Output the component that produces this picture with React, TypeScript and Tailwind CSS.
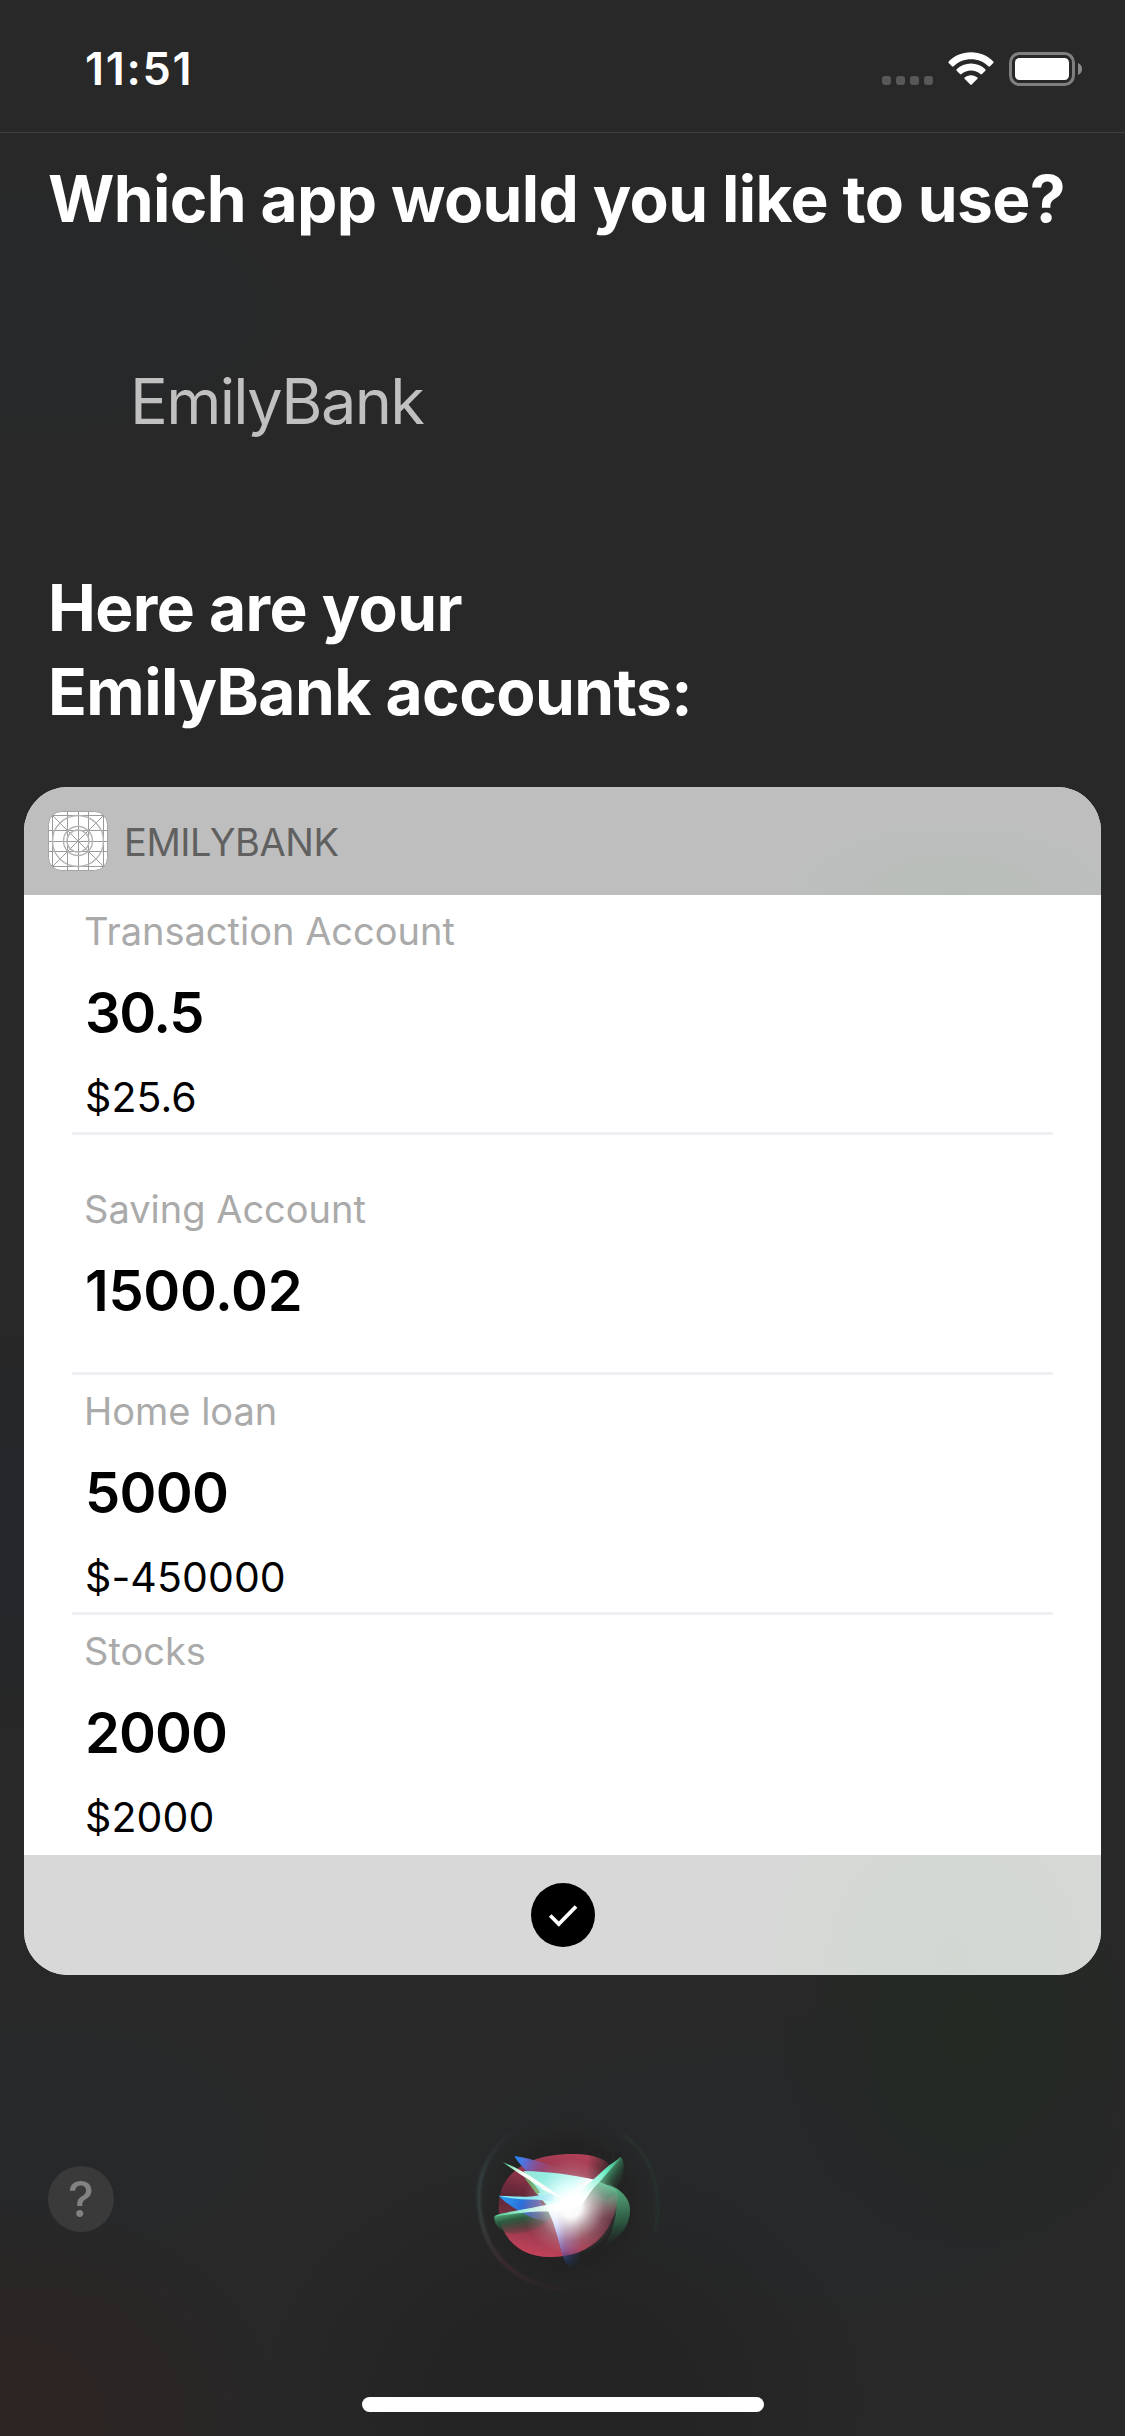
import React from "react";

type Account = {
  name: string;
  value: string;
  tracking: string;
  detail?: string;
};

const accounts: Account[] = [
  { name: "Transaction Account", value: "30.5", tracking: "tracking-[-1.4px]", detail: "$25.6" },
  { name: "Saving Account", value: "1500.02", tracking: "tracking-[-0.3px]" },
  { name: "Home loan", value: "5000", tracking: "tracking-[-0.7px]", detail: "$-450000" },
  { name: "Stocks", value: "2000", tracking: "tracking-[-0.9px]", detail: "$2000" },
];

function WifiIcon() {
  return (
    <svg className="h-[34px] w-[48px]" viewBox="0 0 48 34" fill="#fff">
      <path d="M24 0.300C33 0.300 41 3.900 46.300 9.500Q47 10.300 46.300 11L43 14.300Q42.200 15 41.400 14.300C36.800 9.900 30.700 7.300 24 7.300S11.200 9.900 6.600 14.300Q5.800 15 5 14.300L1.700 11Q1 10.300 1.700 9.500C7 3.900 15 0.300 24 0.300Z" />
      <path d="M24 11.500C29.600 11.500 34.600 13.700 38.300 17.300Q39 18.100 38.300 18.800L35 22.100Q34.200 22.800 33.400 22.100C30.900 19.800 27.600 18.500 24 18.500S17.100 19.800 14.600 22.100Q13.800 22.800 13 22.100L9.700 18.800Q9 18.100 9.700 17.300C13.400 13.700 18.400 11.500 24 11.500Z" />
      <path d="M24 23.200C26.600 23.200 28.800 24.200 30.400 25.600Q31 26.200 30.400 26.800L24.700 32.600Q24 33.300 23.300 32.600L17.600 26.800Q17 26.200 17.600 25.600C19.200 24.200 21.400 23.200 24 23.200Z" />
    </svg>
  );
}

function BatteryIcon() {
  return (
    <svg className="h-[34px] w-[74px]" viewBox="0 0 74 34">
      <rect x="1.500" y="1.500" width="63" height="31" rx="9" fill="none" stroke="#7f7f7f" strokeWidth="3" />
      <rect x="6" y="6" width="54" height="22" rx="4.500" fill="#fff" />
      <path d="M69 11C71.500 12 73 14.300 73 17S71.500 22 69 23Z" fill="#8a8a8a" />
    </svg>
  );
}

function GridIcon() {
  return (
    <svg className="size-[60px]" viewBox="0 0 60 60">
      <defs>
        <clipPath id="tile">
          <rect x="0.500" y="0.500" width="59" height="59" rx="13" />
        </clipPath>
      </defs>
      <g clipPath="url(#tile)" stroke="#9b9b9b" strokeWidth="1" fill="none">
        <rect width="60" height="60" fill="#fff" stroke="none" />
        <path d="M4.500 0V60M19.500 0V60M30.500 0V60M40.500 0V60M55.500 0V60M0 4.500H60M0 19.500H60M0 30.500H60M0 40.500H60M0 55.500H60" />
        <path d="M4 4L56 56M56 4L4 56" />
        <g stroke="#b4b4b4" strokeWidth="1.400">
          <circle cx="30" cy="30" r="25.500" />
          <circle cx="30" cy="30" r="14.500" />
          <circle cx="30" cy="30" r="11" />
        </g>
      </g>
      <rect x="0.500" y="0.500" width="59" height="59" rx="13" fill="none" stroke="#a4a4a4" />
    </svg>
  );
}

function SiriOrb() {
  return (
    <svg className="h-[230px] w-[250px]" viewBox="0 0 750 690">
      <defs>
        <linearGradient id="ring" gradientUnits="userSpaceOnUse" x1="200" y1="110" x2="300" y2="610">
          <stop offset="0" stopColor="#30505c" stopOpacity="0" />
          <stop offset="0.250" stopColor="#48686c" stopOpacity="0.550" />
          <stop offset="0.550" stopColor="#5a6a66" stopOpacity="0.550" />
          <stop offset="0.800" stopColor="#6a3040" stopOpacity="0.550" />
          <stop offset="1" stopColor="#6a3040" stopOpacity="0.100" />
        </linearGradient>
        <radialGradient id="shade">
          <stop offset="0" stopColor="#1f1f1f" />
          <stop offset="0.700" stopColor="#222222" stopOpacity="0.800" />
          <stop offset="1" stopColor="#262626" stopOpacity="0" />
        </radialGradient>
        <linearGradient id="red" gradientUnits="userSpaceOnUse" x1="400" y1="192" x2="330" y2="501">
          <stop offset="0" stopColor="#b04058" />
          <stop offset="0.300" stopColor="#8a3148" />
          <stop offset="0.520" stopColor="#5c2836" />
          <stop offset="0.700" stopColor="#753040" />
          <stop offset="0.850" stopColor="#a23c50" />
          <stop offset="1" stopColor="#c0425a" />
        </linearGradient>
        <linearGradient id="cornerShade" gradientUnits="userSpaceOnUse" x1="440" y1="235" x2="530" y2="245">
          <stop offset="0" stopColor="#232323" stopOpacity="0" />
          <stop offset="0.800" stopColor="#232323" stopOpacity="0.850" />
          <stop offset="1" stopColor="#232323" />
        </linearGradient>
        <linearGradient id="greenRight" gradientUnits="userSpaceOnUse" x1="500" y1="280" x2="520" y2="470">
          <stop offset="0" stopColor="#58b488" />
          <stop offset="0.350" stopColor="#43825f" />
          <stop offset="0.650" stopColor="#2c6045" stopOpacity="0.800" />
          <stop offset="1" stopColor="#263c30" stopOpacity="0" />
        </linearGradient>
        <linearGradient id="greenInner" gradientUnits="userSpaceOnUse" x1="470" y1="275" x2="450" y2="380">
          <stop offset="0" stopColor="#62c496" />
          <stop offset="0.450" stopColor="#5c9478" stopOpacity="0.750" />
          <stop offset="1" stopColor="#6a5058" stopOpacity="0" />
        </linearGradient>
        <linearGradient id="greenLeft" gradientUnits="userSpaceOnUse" x1="220" y1="365" x2="235" y2="440">
          <stop offset="0" stopColor="#4fa878" />
          <stop offset="0.300" stopColor="#2c5c40" />
          <stop offset="1" stopColor="#26382e" stopOpacity="0" />
        </linearGradient>
        <linearGradient id="greenTip" gradientUnits="userSpaceOnUse" x1="500" y1="235" x2="556" y2="270">
          <stop offset="0" stopColor="#4fa47c" />
          <stop offset="0.400" stopColor="#2f5c44" />
          <stop offset="1" stopColor="#26362e" stopOpacity="0" />
        </linearGradient>
        <linearGradient id="cyan" gradientUnits="userSpaceOnUse" x1="250" y1="245" x2="390" y2="350">
          <stop offset="0" stopColor="#a6e4d6" />
          <stop offset="0.350" stopColor="#86f0e2" />
          <stop offset="0.800" stopColor="#b4fdf8" />
          <stop offset="1" stopColor="#ffffff" />
        </linearGradient>
        <linearGradient id="blueTop" gradientUnits="userSpaceOnUse" x1="225" y1="200" x2="370" y2="260">
          <stop offset="0" stopColor="#1d8fff" />
          <stop offset="0.250" stopColor="#5f68cc" />
          <stop offset="0.500" stopColor="#8a56a0" stopOpacity="0.600" />
          <stop offset="0.900" stopColor="#a85080" stopOpacity="0" />
        </linearGradient>
        <linearGradient id="blueLeft" gradientUnits="userSpaceOnUse" x1="180" y1="320" x2="330" y2="395">
          <stop offset="0" stopColor="#2aa0f0" />
          <stop offset="0.400" stopColor="#2b70dc" />
          <stop offset="0.750" stopColor="#5c60b0" stopOpacity="0.700" />
          <stop offset="1" stopColor="#6a4c88" stopOpacity="0" />
        </linearGradient>
        <linearGradient id="blueDown" gradientUnits="userSpaceOnUse" x1="350" y1="350" x2="395" y2="540">
          <stop offset="0" stopColor="#ffffff" />
          <stop offset="0.350" stopColor="#a9b8f4" />
          <stop offset="0.700" stopColor="#6a5cb4" />
          <stop offset="0.840" stopColor="#243e78" />
          <stop offset="1" stopColor="#20304c" stopOpacity="0" />
        </linearGradient>
        <linearGradient id="downFade" gradientUnits="userSpaceOnUse" x1="352" y1="430" x2="425" y2="425">
          <stop offset="0" stopColor="#fff" />
          <stop offset="0.300" stopColor="#fff" stopOpacity="0.500" />
          <stop offset="1" stopColor="#fff" stopOpacity="0" />
        </linearGradient>
        <mask id="downMask">
          <rect width="750" height="690" fill="url(#downFade)" />
        </mask>
        <linearGradient id="beamRight" gradientUnits="userSpaceOnUse" x1="540" y1="205" x2="410" y2="325">
          <stop offset="0" stopColor="#3f9870" />
          <stop offset="0.350" stopColor="#6cf0c8" />
          <stop offset="0.700" stopColor="#b8fff0" />
          <stop offset="1" stopColor="#ffffff" />
        </linearGradient>
        <linearGradient id="beamLeft" gradientUnits="userSpaceOnUse" x1="165" y1="380" x2="350" y2="345">
          <stop offset="0" stopColor="#4fc890" />
          <stop offset="0.450" stopColor="#a2f0dc" />
          <stop offset="1" stopColor="#ffffff" />
        </linearGradient>
        <linearGradient id="beamTop" gradientUnits="userSpaceOnUse" x1="190" y1="220" x2="340" y2="310">
          <stop offset="0" stopColor="#48c888" />
          <stop offset="0.350" stopColor="#f4fff8" />
          <stop offset="1" stopColor="#ffffff" />
        </linearGradient>
        <radialGradient id="glow" gradientUnits="userSpaceOnUse" cx="392" cy="350" r="145">
          <stop offset="0" stopColor="#fff" />
          <stop offset="0.220" stopColor="#fff" stopOpacity="0.970" />
          <stop offset="0.450" stopColor="#fff" stopOpacity="0.550" />
          <stop offset="0.700" stopColor="#ffe8ec" stopOpacity="0.200" />
          <stop offset="1" stopColor="#ffd0d8" stopOpacity="0" />
        </radialGradient>
        <filter id="soft" x="-10%" y="-10%" width="120%" height="120%">
          <feGaussianBlur stdDeviation="2" />
        </filter>
        <filter id="softer" x="-10%" y="-10%" width="120%" height="120%">
          <feGaussianBlur stdDeviation="5" />
        </filter>
      </defs>
      <circle cx="385" cy="345" r="268" fill="url(#shade)" />
      <g filter="url(#softer)">
        <path d="M225 118C140 180 105 270 120 365C137 500 235 590 385 600" fill="none" stroke="url(#ring)" strokeWidth="7" />
        <path d="M550 135C600 170 642 225 652 320C655 350 652 390 645 425" fill="none" stroke="#2c4a38" strokeOpacity="0.400" strokeWidth="7" />
      </g>
      <g filter="url(#soft)">
        <path d="M176 350C176 245 270 192 395 192C480 192 536 215 534 300C530 420 460 501 330 501C235 501 176 440 176 350Z" fill="url(#red)" />
        <path d="M440 185H545V300L500 330L440 290Z" fill="url(#cornerShade)" />
        <path d="M163 380C190 368 260 365 350 350L330 385C300 420 240 440 200 428C175 418 162 400 163 380Z" fill="url(#greenLeft)" />
        <path d="M440 264L475 272C545 290 578 330 569 376C560 425 530 450 490 470C520 430 533 370 531 310Z" fill="url(#greenRight)" />
        <path d="M400 258L475 272C510 280 525 292 532 305C534 340 530 365 520 390L390 390Z" fill="url(#greenInner)" />
        <path d="M470 272L540 201C556 205 556 262 530 296Z" fill="url(#greenTip)" />
        <path d="M223 198C280 208 340 222 400 260L262 246C248 232 235 218 223 198Z" fill="url(#blueTop)" />
        <path d="M176 318L300 330L335 395C280 395 215 355 176 318Z" fill="url(#blueLeft)" />
        <path d="M250 243C330 245 400 254 475 272L425 345L340 370L290 310C280 285 268 265 250 243Z" fill="url(#cyan)" />
        <path d="M252 262L290 312L300 308C288 288 272 270 252 262Z" fill="#70a868" />
        <g mask="url(#downMask)">
          <path d="M320 355L430 350C430 420 420 520 410 540C385 540 374 515 366 490C350 430 340 390 320 355Z" fill="url(#blueDown)" />
        </g>
        <path d="M176 317C220 319 260 323 290 317L340 310L340 335L290 329C250 328 210 327 176 317Z" fill="#86e8f4" />
        <path d="M163 380C165 370 240 362 330 342L390 340L345 366C300 360 220 370 163 380Z" fill="url(#beamLeft)" />
        <path d="M543 203C510 218 480 252 430 294L390 335L415 338C460 300 500 250 543 203Z" fill="url(#beamRight)" />
        <path d="M188 216C225 230 265 254 310 284L375 330L310 300C280 275 235 252 188 216Z" fill="url(#beamTop)" />
        <circle cx="392" cy="350" r="145" fill="url(#glow)" />
      </g>
    </svg>
  );
}

export default function App() {
  return (
    <div className="flex h-[2436px] w-[1125px] flex-col overflow-hidden bg-[#282828] bg-[radial-gradient(ellipse_190px_220px_at_970px_2030px,#222a23_0%,#222a2300_100%),radial-gradient(ellipse_280px_220px_at_0px_2420px,#2c2524_30%,#2c252400_100%),radial-gradient(ellipse_300px_240px_at_562px_2400px,#232323_30%,#23232300_100%),radial-gradient(ellipse_420px_180px_at_760px_2180px,#26282a_20%,#26282a00_100%),radial-gradient(ellipse_300px_160px_at_40px_2140px,#26282a_20%,#26282a00_100%),radial-gradient(ellipse_320px_160px_at_40px_310px,#26282a_20%,#26282a00_100%),radial-gradient(ellipse_200px_200px_at_0px_1530px,#25272a_40%,#25272a00_100%)] font-['Inter',sans-serif] text-white">
      <header className="flex h-[133px] shrink-0 items-start border-b border-[#3f3f3f] pl-[85px]">
        <span className="mt-[47px] text-[45px] leading-[44px] font-semibold tracking-[1.7px]">11:51</span>
        <div className="mt-[52px] mr-[42px] ml-auto flex items-start">
          <div className="mt-[24px] mr-[14px] flex gap-[5px]">
            <i className="size-[9px] rounded-[3px] bg-[#585858]" />
            <i className="size-[9px] rounded-[3px] bg-[#585858]" />
            <i className="size-[9px] rounded-[3px] bg-[#585858]" />
            <i className="size-[9px] rounded-[3px] bg-[#585858]" />
          </div>
          <WifiIcon />
          <div className="ml-[14px]">
            <BatteryIcon />
          </div>
        </div>
      </header>

      <h1 className="mt-[24px] pl-[48px] text-[64px] leading-[84px] font-bold tracking-[-0.62px] whitespace-nowrap">
        Which app would you like to use?
      </h1>
      <p className="mt-[118px] pl-[130px] text-[63px] leading-[84px] tracking-[-1.65px] text-[#c0c0c0]">EmilyBank</p>
      <h2 className="mt-[123px] pl-[48px] text-[64px] leading-[84px] font-bold tracking-[-0.55px]">
        Here are your
        <br />
        EmilyBank accounts:
      </h2>

      <section className="mx-[24px] mt-[53px] shrink-0 overflow-hidden rounded-[44px] bg-white">
        <div className="flex h-[108px] items-center bg-[#bebebf] bg-[radial-gradient(ellipse_180px_80px_at_930px_108px,#b7beb8_0%,#b7beb800_100%)] pl-[24px]">
          <GridIcon />
          <span className="ml-[16px] pt-[2px] text-[38px] tracking-[-0.45px] text-[#606060]">EMILYBANK</span>
        </div>
        <ul className="px-[48px]">
          {accounts.map((a) => (
            <li
              key={a.name}
              className="flex h-[240px] flex-col justify-center border-b-[3px] border-[#efeff4] pl-[13px] last:border-transparent"
            >
              <span className="-ml-px text-[38px] leading-[48px] text-[#aaaaaa]">{a.name}</span>
              <span className={`mt-[26px] text-[56px] leading-[64px] font-semibold text-black ${a.tracking}`}>{a.value}</span>
              {a.detail && <span className="mt-[28px] text-[41px] leading-[48px] tracking-[0.1px] text-black">{a.detail}</span>}
            </li>
          ))}
        </ul>
        <div className="flex h-[120px] items-center justify-center bg-[#d7d8d7] bg-[radial-gradient(ellipse_200px_200px_at_930px_100px,#d1d8d2_0%,#d1d8d200_100%)]">
          <svg className="size-[64px]" viewBox="0 0 64 64">
            <circle cx="32" cy="32" r="32" fill="#000" />
            <path d="M19.200 32.500L27.800 41L45 23.500" fill="none" stroke="#fff" strokeWidth="3.800" />
          </svg>
        </div>
      </section>

      <div className="mt-[115px] flex shrink-0 items-start pl-[48px]">
        <button className="mt-[76px] flex size-[66px] items-center justify-center rounded-full bg-[#3a3a3b] text-[49px] leading-none font-medium text-[#828282]">
          ?
        </button>
        <div className="ml-[326px]">
          <SiriOrb />
        </div>
      </div>

      <div className="mx-auto mt-[77px] h-[15px] w-[402px] shrink-0 rounded-full bg-white" />
    </div>
  );
}
